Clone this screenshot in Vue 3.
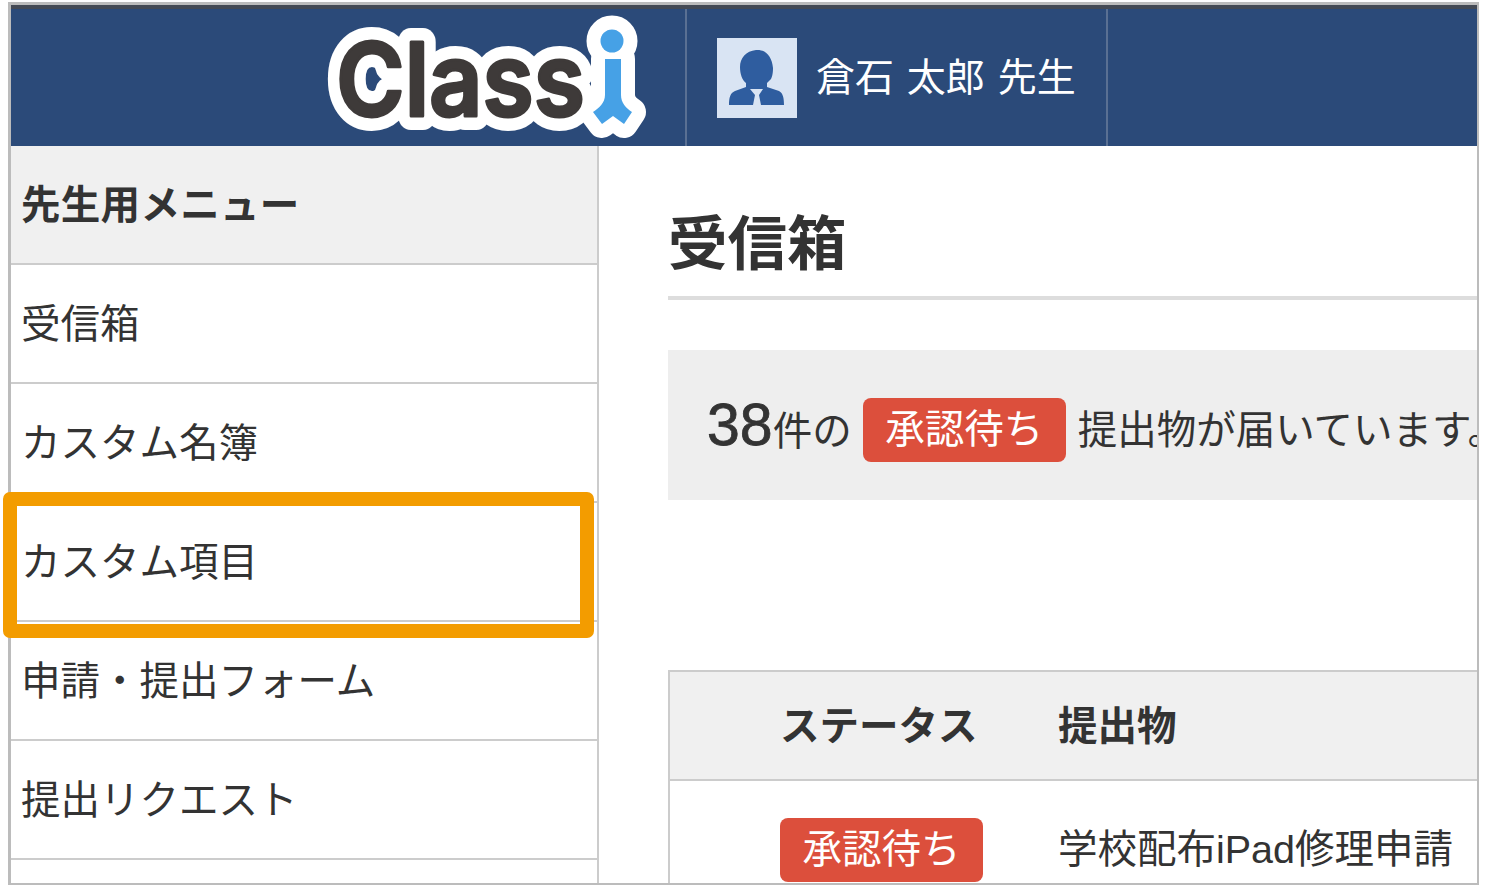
<template>
  <div class="page">
    <div class="frame">
      <header class="top-bar">
        <div class="logo-cell">
          <svg class="logo" viewBox="320 9 330 137" width="330" height="137">
            <g class="logo-outline">
              <text x="337" y="117" textLength="249" lengthAdjust="spacingAndGlyphs">Class</text>
              <circle cx="613" cy="42" r="11.5" />
              <path d="M606 60H622V96C622 104 627 109 633 113L625 125L614 117L603 125L594 113C600 109 606 104 606 96Z" />
            </g>
            <text class="logo-text" x="337" y="117" textLength="249" lengthAdjust="spacingAndGlyphs">Class</text>
            <circle class="logo-i" cx="613" cy="42" r="11.5" />
            <path class="logo-i" d="M606 60H622V96C622 104 627 109 633 113L625 125L614 117L603 125L594 113C600 109 606 104 606 96Z" />
          </svg>
        </div>
        <div class="user-cell">
          <div class="avatar">
            <svg viewBox="0 0 80 80" width="80" height="80">
              <path class="person" d="M39 12C49 11 55 19 56 30C56 36 55 39 54 41L50 45V49L62 53C66 55 67 60 67 67H12C12 60 13 55 18 53L29 49V45C25 42 23 36 23 29C23 20 29 13 39 12Z" />
              <path class="collar" d="M33 51H46L42 57L44 67H36L38 57Z" />
            </svg>
          </div>
          <span class="user-name">倉石 太郎 先生</span>
        </div>
      </header>

      <div class="body">
        <nav class="side-menu">
          <div class="menu-title">先生用メニュー</div>
          <div v-for="item in menuItems" :key="item" class="menu-item">{{ item }}</div>
        </nav>

        <main class="content">
          <h1>受信箱</h1>

          <div class="notice">
            <span class="count">38</span><span class="unit">件の</span>
            <span class="badge">承認待ち</span>
            <span class="notice-text">提出物が届いています。</span>
          </div>

          <div class="inbox-table">
            <div class="table-head">
              <span class="col-status">ステータス</span>
              <span>提出物</span>
            </div>
            <div class="table-row">
              <span class="col-status"><span class="badge">承認待ち</span></span>
              <span>学校配布iPad修理申請</span>
            </div>
          </div>
        </main>
      </div>
    </div>

    <div class="highlight"></div>
  </div>
</template>

<script setup>
const menuItems = [
  '受信箱',
  'カスタム名簿',
  'カスタム項目',
  '申請・提出フォーム',
  '提出リクエスト'
]
</script>

<style>
html, body {
  margin: 0;
  background: #fff;
}
</style>

<style scoped>
.page {
  position: relative;
  width: 1485px;
  height: 889px;
  overflow: hidden;
  font-family: "Liberation Sans", "Noto Sans CJK JP", sans-serif;
  color: #333;
}

.frame {
  box-sizing: border-box;
  width: 1471px;
  height: 883px;
  margin: 2px 0 0 8px;
  border: 3px solid #bcbcbc;
  border-right-width: 2px;
  border-bottom-width: 2px;
  overflow: hidden;
  display: flex;
  flex-direction: column;
  background: #fff;
}

.top-bar {
  flex: none;
  display: flex;
  height: 141px;
  box-sizing: border-box;
  background: #2b4a79;
  border-top: 4px solid #444a55;
}

.logo-cell {
  width: 676px;
  display: flex;
  justify-content: flex-end;
  box-sizing: border-box;
  border-right: 2px solid #5a7093;
}

.logo {
  display: block;
  margin-top: -1px;
  margin-right: 36px;
  overflow: visible;
}

.logo text {
  font-family: Inter, "Liberation Sans", sans-serif;
  font-weight: 600;
  font-size: 102px;
}

.logo-outline {
  fill: #fff;
  stroke: #fff;
  stroke-width: 28px;
  stroke-linejoin: round;
}

.logo-text {
  fill: #3e3a39;
  stroke: #3e3a39;
  stroke-width: 3px;
  stroke-linejoin: round;
}

.logo-i {
  fill: #46a1e6;
}

.user-cell {
  width: 421px;
  box-sizing: border-box;
  border-right: 2px solid #5a7093;
  display: flex;
  align-items: center;
  padding-left: 30px;
}

.avatar {
  flex: none;
  width: 80px;
  height: 80px;
  background: #d9e4f3;
}

.avatar svg {
  display: block;
}

.person {
  fill: #2f5d9f;
}

.collar {
  fill: #d9e4f3;
}

.user-name {
  margin-left: 19px;
  color: #fff;
  font-size: 39px;
  word-spacing: 2px;
  line-height: 1;
}

.body {
  flex: 1;
  display: flex;
  min-height: 0;
}

.side-menu {
  flex: none;
  width: 588px;
  box-sizing: border-box;
  border-right: 2px solid #ccc;
}

.menu-title,
.menu-item {
  box-sizing: border-box;
  height: 119px;
  display: flex;
  align-items: center;
  padding-left: 10px;
  padding-bottom: 6px;
  font-size: 39.5px;
  border-bottom: 2px solid #ccc;
}

.menu-title {
  background: #f0f0f0;
  font-weight: 700;
  letter-spacing: 0.3px;
}

.content {
  flex: 1;
  min-width: 0;
  padding-left: 69px;
  overflow: hidden;
}

h1 {
  margin: 0;
  height: 154px;
  box-sizing: border-box;
  padding-top: 63px;
  font-size: 59.5px;
  line-height: 72px;
  font-weight: 700;
  border-bottom: 4px solid #ddd;
}

.notice {
  display: flex;
  align-items: center;
  height: 150px;
  margin-top: 50px;
  padding-left: 39px;
  background: #eee;
  font-size: 39.5px;
  white-space: nowrap;
  overflow: hidden;
}

.count {
  font-size: 59px;
  -webkit-text-stroke: 0.8px #333;
}

.unit {
  margin-top: 4px;
  margin-right: 11px;
}

.badge {
  display: inline-block;
  padding: 0 22.5px;
  height: 64px;
  line-height: 62px;
  border-radius: 8px;
  background: #dc4f3c;
  color: #fff;
  font-size: 39.5px;
}

.notice .badge {
  margin-top: 10px;
}

.notice-text {
  margin-top: 2px;
  margin-left: 12px;
}

.inbox-table {
  margin-top: 170px;
  border-top: 2px solid #ccc;
  border-left: 2px solid #ccc;
  font-size: 39.5px;
}

.table-head,
.table-row {
  display: flex;
  align-items: center;
  box-sizing: border-box;
  padding-left: 110px;
  white-space: nowrap;
}

.table-head {
  height: 109px;
  padding-bottom: 6px;
  background: #f0f0f0;
  border-bottom: 2px solid #ccc;
  font-weight: 700;
}

.table-row {
  height: 136px;
  align-items: flex-start;
  padding-top: 36px;
  line-height: 64px;
}

.col-status {
  flex: none;
  width: 278px;
}

.highlight {
  position: absolute;
  left: 3px;
  top: 492px;
  width: 591px;
  height: 146px;
  box-sizing: border-box;
  border: 14px solid #f39c00;
  border-radius: 7px;
}
</style>
